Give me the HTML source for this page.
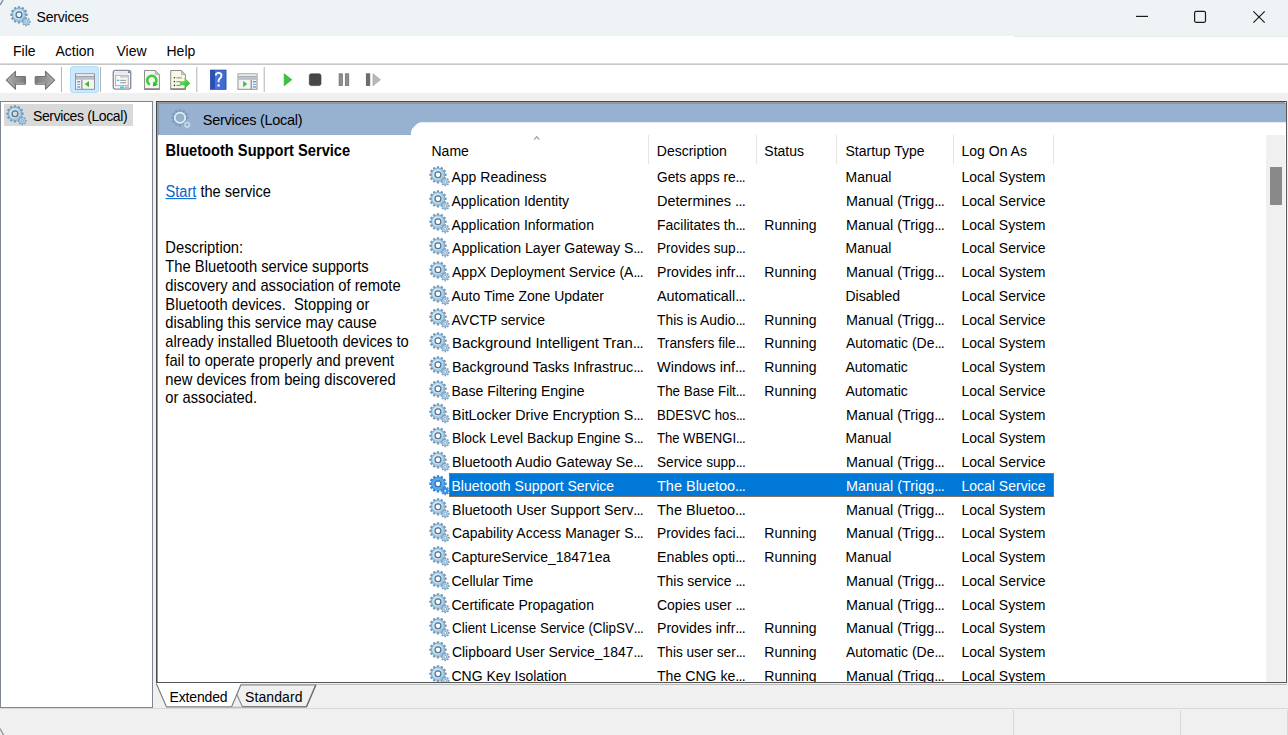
<!DOCTYPE html>
<html><head><meta charset="utf-8">
<style>
*{margin:0;padding:0;box-sizing:border-box}
html,body{width:1288px;height:735px;overflow:hidden;background:#f0f0f0;font-family:"Liberation Sans",sans-serif;font-size:14px;color:#000}
.a{position:absolute}
.t{position:absolute;white-space:nowrap}
</style></head><body>
<svg width="0" height="0" style="position:absolute">
<defs>
<radialGradient id="gr" cx="0.45" cy="0.45" r="0.6">
<stop offset="0.3" stop-color="#eaf8fd"/><stop offset="0.75" stop-color="#c2e4f4"/><stop offset="1" stop-color="#9cc6e4"/>
</radialGradient>
<g id="gear">
<path fill="#7799b8" fill-rule="evenodd" d="M7.21 2.14 L7.78 2.01 L7.82 0.18 L10.18 0.18 L10.22 2.01 L10.79 2.14 L11.34 2.31 L12.29 0.74 L14.33 1.93 L13.45 3.53 L13.88 3.92 L14.27 4.35 L15.87 3.47 L17.06 5.51 L15.49 6.46 L15.66 7.01 L15.79 7.58 L17.62 7.62 L17.62 9.98 L15.79 10.02 L15.66 10.59 L15.49 11.14 L17.06 12.09 L15.87 14.13 L14.27 13.25 L13.88 13.68 L13.45 14.07 L14.33 15.67 L12.29 16.86 L11.34 15.29 L10.79 15.46 L10.22 15.59 L10.18 17.42 L7.82 17.42 L7.78 15.59 L7.21 15.46 L6.66 15.29 L5.71 16.86 L3.67 15.67 L4.55 14.07 L4.12 13.68 L3.73 13.25 L2.13 14.13 L0.94 12.09 L2.51 11.14 L2.34 10.59 L2.21 10.02 L0.38 9.98 L0.38 7.62 L2.21 7.58 L2.34 7.01 L2.51 6.46 L0.94 5.51 L2.13 3.47 L3.73 4.35 L4.12 3.92 L4.55 3.53 L3.67 1.93 L5.71 0.74 L6.66 2.31Z M11.40 8.80 A2.4 2.4 0 1 0 6.60 8.80 A2.4 2.4 0 1 0 11.40 8.80Z"/>
<circle cx="9.0" cy="8.8" r="4.9" fill="none" stroke="url(#gr)" stroke-width="3.2"/>
<circle cx="9.0" cy="8.8" r="3.0" fill="none" stroke="#58728d" stroke-width="1.1"/>
<path fill="#7fa3c3" fill-rule="evenodd" d="M14.90 12.66 L15.34 12.51 L15.32 11.28 L17.08 11.28 L17.06 12.51 L17.50 12.66 L17.92 12.87 L18.77 11.99 L20.01 13.23 L19.13 14.08 L19.34 14.50 L19.49 14.94 L20.72 14.92 L20.72 16.68 L19.49 16.66 L19.34 17.10 L19.13 17.52 L20.01 18.37 L18.77 19.61 L17.92 18.73 L17.50 18.94 L17.06 19.09 L17.08 20.32 L15.32 20.32 L15.34 19.09 L14.90 18.94 L14.48 18.73 L13.63 19.61 L12.39 18.37 L13.27 17.52 L13.06 17.10 L12.91 16.66 L11.68 16.68 L11.68 14.92 L12.91 14.94 L13.06 14.50 L13.27 14.08 L12.39 13.23 L13.63 11.99 L14.48 12.87Z M17.10 15.80 A0.9 0.9 0 1 0 15.30 15.80 A0.9 0.9 0 1 0 17.10 15.80Z"/>
<circle cx="16.2" cy="15.8" r="2.2" fill="none" stroke="#b6d4ea" stroke-width="1.1"/>
</g>
<g id="gearsel">
<path fill="#2f84d6" fill-rule="evenodd" d="M7.21 2.14 L7.78 2.01 L7.82 0.18 L10.18 0.18 L10.22 2.01 L10.79 2.14 L11.34 2.31 L12.29 0.74 L14.33 1.93 L13.45 3.53 L13.88 3.92 L14.27 4.35 L15.87 3.47 L17.06 5.51 L15.49 6.46 L15.66 7.01 L15.79 7.58 L17.62 7.62 L17.62 9.98 L15.79 10.02 L15.66 10.59 L15.49 11.14 L17.06 12.09 L15.87 14.13 L14.27 13.25 L13.88 13.68 L13.45 14.07 L14.33 15.67 L12.29 16.86 L11.34 15.29 L10.79 15.46 L10.22 15.59 L10.18 17.42 L7.82 17.42 L7.78 15.59 L7.21 15.46 L6.66 15.29 L5.71 16.86 L3.67 15.67 L4.55 14.07 L4.12 13.68 L3.73 13.25 L2.13 14.13 L0.94 12.09 L2.51 11.14 L2.34 10.59 L2.21 10.02 L0.38 9.98 L0.38 7.62 L2.21 7.58 L2.34 7.01 L2.51 6.46 L0.94 5.51 L2.13 3.47 L3.73 4.35 L4.12 3.92 L4.55 3.53 L3.67 1.93 L5.71 0.74 L6.66 2.31Z M11.40 8.80 A2.4 2.4 0 1 0 6.60 8.80 A2.4 2.4 0 1 0 11.40 8.80Z"/>
<circle cx="9.0" cy="8.8" r="4.9" fill="none" stroke="#5aa8e8" stroke-width="3.0"/>
<circle cx="9.0" cy="8.8" r="3.0" fill="none" stroke="#2d78c4" stroke-width="1.1"/>
<path fill="#3d8edb" fill-rule="evenodd" d="M14.90 12.66 L15.34 12.51 L15.32 11.28 L17.08 11.28 L17.06 12.51 L17.50 12.66 L17.92 12.87 L18.77 11.99 L20.01 13.23 L19.13 14.08 L19.34 14.50 L19.49 14.94 L20.72 14.92 L20.72 16.68 L19.49 16.66 L19.34 17.10 L19.13 17.52 L20.01 18.37 L18.77 19.61 L17.92 18.73 L17.50 18.94 L17.06 19.09 L17.08 20.32 L15.32 20.32 L15.34 19.09 L14.90 18.94 L14.48 18.73 L13.63 19.61 L12.39 18.37 L13.27 17.52 L13.06 17.10 L12.91 16.66 L11.68 16.68 L11.68 14.92 L12.91 14.94 L13.06 14.50 L13.27 14.08 L12.39 13.23 L13.63 11.99 L14.48 12.87Z M17.10 15.80 A0.9 0.9 0 1 0 15.30 15.80 A0.9 0.9 0 1 0 17.10 15.80Z"/>
</g>
<g id="gearhdr">
<path fill="#7890ac" fill-rule="evenodd" opacity="0.75" d="M7.21 2.14 L7.78 2.01 L7.82 0.18 L10.18 0.18 L10.22 2.01 L10.79 2.14 L11.34 2.31 L12.29 0.74 L14.33 1.93 L13.45 3.53 L13.88 3.92 L14.27 4.35 L15.87 3.47 L17.06 5.51 L15.49 6.46 L15.66 7.01 L15.79 7.58 L17.62 7.62 L17.62 9.98 L15.79 10.02 L15.66 10.59 L15.49 11.14 L17.06 12.09 L15.87 14.13 L14.27 13.25 L13.88 13.68 L13.45 14.07 L14.33 15.67 L12.29 16.86 L11.34 15.29 L10.79 15.46 L10.22 15.59 L10.18 17.42 L7.82 17.42 L7.78 15.59 L7.21 15.46 L6.66 15.29 L5.71 16.86 L3.67 15.67 L4.55 14.07 L4.12 13.68 L3.73 13.25 L2.13 14.13 L0.94 12.09 L2.51 11.14 L2.34 10.59 L2.21 10.02 L0.38 9.98 L0.38 7.62 L2.21 7.58 L2.34 7.01 L2.51 6.46 L0.94 5.51 L2.13 3.47 L3.73 4.35 L4.12 3.92 L4.55 3.53 L3.67 1.93 L5.71 0.74 L6.66 2.31Z M11.40 8.80 A2.4 2.4 0 1 0 6.60 8.80 A2.4 2.4 0 1 0 11.40 8.80Z"/>
<circle cx="9.0" cy="8.8" r="6.2" fill="#97b1d1"/>
<circle cx="9.0" cy="8.8" r="5.0" fill="none" stroke="#d6f0fa" stroke-width="2.0"/>
<circle cx="9.0" cy="8.8" r="3.9" fill="none" stroke="#9c9a9e" stroke-width="0.6" opacity="0.7"/>
<path fill="#9fb6cf" fill-rule="evenodd" d="M14.90 12.66 L15.34 12.51 L15.32 11.28 L17.08 11.28 L17.06 12.51 L17.50 12.66 L17.92 12.87 L18.77 11.99 L20.01 13.23 L19.13 14.08 L19.34 14.50 L19.49 14.94 L20.72 14.92 L20.72 16.68 L19.49 16.66 L19.34 17.10 L19.13 17.52 L20.01 18.37 L18.77 19.61 L17.92 18.73 L17.50 18.94 L17.06 19.09 L17.08 20.32 L15.32 20.32 L15.34 19.09 L14.90 18.94 L14.48 18.73 L13.63 19.61 L12.39 18.37 L13.27 17.52 L13.06 17.10 L12.91 16.66 L11.68 16.68 L11.68 14.92 L12.91 14.94 L13.06 14.50 L13.27 14.08 L12.39 13.23 L13.63 11.99 L14.48 12.87Z M17.10 15.80 A0.9 0.9 0 1 0 15.30 15.80 A0.9 0.9 0 1 0 17.10 15.80Z"/>
<circle cx="16.2" cy="15.8" r="2.3" fill="none" stroke="#cfe3f0" stroke-width="1.1"/>
</g>
</defs>
</svg>

<div class="a" style="left:0;top:0;width:1288px;height:36px;background:#eef3f5"></div>
<svg class="a" style="left:9.5px;top:6px" width="22" height="22"><use href="#gear"/></svg>
<svg class="a" style="left:0;top:0" width="6" height="8"><path d="M3 0 L0 5" stroke="#8a94a8" stroke-width="1.5"/></svg>
<div class="t" style="left:36.50px;top:7.85px;font-size:14px;line-height:18px;letter-spacing:-0.2px;transform:scale(1.0000,1.0700);transform-origin:0 13.85px;">Services</div>
<svg class="a" style="left:1120px;top:0" width="168" height="36"><line x1="16" y1="16.4" x2="28" y2="16.4" stroke="#1a1a1a" stroke-width="1.2"/><rect x="74.6" y="11.4" width="10.9" height="10.9" rx="1.5" fill="none" stroke="#1a1a1a" stroke-width="1.2"/><path d="M133.4 11.3 L144.7 22.6 M144.7 11.3 L133.4 22.6" stroke="#1a1a1a" stroke-width="1.2"/></svg>
<div class="a" style="left:0;top:36px;width:1288px;height:27px;background:#fff"></div>
<div class="a" style="left:1014px;top:36px;width:274px;height:1px;background:#e9eaea"></div>
<div class="t" style="left:13.00px;top:41.75px;font-size:14px;line-height:18px;transform:scale(1.0000,1.0700);transform-origin:0 13.85px;">File</div>
<div class="t" style="left:55.50px;top:41.75px;font-size:14px;line-height:18px;transform:scale(1.0000,1.0700);transform-origin:0 13.85px;">Action</div>
<div class="t" style="left:116.50px;top:41.75px;font-size:14px;line-height:18px;transform:scale(1.0000,1.0700);transform-origin:0 13.85px;">View</div>
<div class="t" style="left:166.50px;top:41.75px;font-size:14px;line-height:18px;transform:scale(1.0000,1.0700);transform-origin:0 13.85px;">Help</div>
<div class="a" style="left:0;top:63px;width:1288px;height:1px;background:#dadada"></div>
<div class="a" style="left:0;top:64px;width:1288px;height:1px;background:#c6c6c6"></div>
<div class="a" style="left:0;top:65px;width:1288px;height:28px;background:#fff"></div>
<div class="a" style="left:0;top:93px;width:1288px;height:8px;background:#f0f0f0"></div>
<svg class="a" style="left:0;top:0" width="400" height="100">
<defs>
<linearGradient id="arw" x1="0" y1="0" x2="1" y2="0"><stop offset="0" stop-color="#a8a8a8"/><stop offset="0.6" stop-color="#909090"/><stop offset="1" stop-color="#7a7a7a"/></linearGradient><linearGradient id="arw2" x1="1" y1="0" x2="0" y2="0"><stop offset="0" stop-color="#a8a8a8"/><stop offset="0.6" stop-color="#909090"/><stop offset="1" stop-color="#7a7a7a"/></linearGradient>
<linearGradient id="grn" x1="0" y1="0" x2="1" y2="1"><stop offset="0" stop-color="#7ee07a"/><stop offset="1" stop-color="#1fb51f"/></linearGradient>
<linearGradient id="hlp" x1="0" y1="0" x2="1" y2="0"><stop offset="0" stop-color="#2b4fb8"/><stop offset="0.3" stop-color="#2b4fb8"/><stop offset="0.31" stop-color="#4a77d8"/><stop offset="1" stop-color="#3d66cc"/></linearGradient>
</defs>
<!-- back / forward -->
<path d="M6.3 80.2 L15.5 71.4 L15.5 76.5 L24.6 76.5 Q25.5 76.5 25.5 77.4 L25.5 83.3 Q25.5 84.3 24.6 84.3 L15.5 84.3 L15.5 89.2 Z" fill="url(#arw)" stroke="#737373" stroke-width="1.1" stroke-linejoin="round"/><path d="M8.2 80.2 L14.5 74.2 M14.5 86.2 L8.2 80.2 M16.2 83.3 L24.5 83.3" fill="none" stroke="#c4c4c4" stroke-width="0.7" opacity="0.8"/>
<path d="M54.7 80.2 L45.5 71.4 L45.5 76.5 L36.1 76.5 Q35.2 76.5 35.2 77.4 L35.2 83.3 Q35.2 84.3 36.1 84.3 L45.5 84.3 L45.5 89.2 Z" fill="url(#arw2)" stroke="#737373" stroke-width="1.1" stroke-linejoin="round"/><path d="M52.8 80.2 L46.5 74.2 M46.5 86.2 L52.8 80.2 M44.8 83.3 L36.5 83.3" fill="none" stroke="#c4c4c4" stroke-width="0.7" opacity="0.8"/>
<rect x="61" y="67" width="1" height="25" fill="#b4b4b4"/>
<!-- highlighted button -->
<rect x="70.5" y="66.5" width="28" height="26" rx="2.5" fill="#cce8fc" stroke="#b4dcfb" stroke-width="1"/>
<rect x="75.5" y="73.8" width="19" height="15.5" fill="#f4f4f4" stroke="#8c939c" stroke-width="1"/>
<rect x="76" y="74.3" width="18" height="2" fill="#e8eaee"/>
<rect x="76" y="76.3" width="18" height="0.8" fill="#7b8594"/>
<rect x="76" y="77.1" width="18" height="2.6" fill="#b9bec6"/>
<rect x="81.2" y="79.7" width="1.3" height="9.5" fill="#8c939c"/>
<rect x="77.2" y="81.2" width="3" height="1.1" fill="#3f7fd0"/>
<rect x="77.2" y="83.8" width="3" height="1.1" fill="#7fa6d8"/>
<rect x="77.2" y="86.4" width="3" height="1.1" fill="#3f7fd0"/>
<path d="M84.8 84 L89 80.9 L89 87.2 Z" fill="#41b83c"/>
<rect x="100" y="67" width="1" height="25" fill="#b4b4b4"/>
<!-- properties -->
<rect x="113.3" y="70.4" width="17.4" height="18.7" rx="2" fill="#f7f7f7" stroke="#8a9099" stroke-width="1.4"/>
<rect x="114.3" y="71.4" width="15.4" height="2" fill="#e5e8ec"/>
<rect x="128" y="71.2" width="2" height="1.8" fill="#6f86a6"/>
<rect x="115.6" y="75.3" width="12.6" height="10.3" fill="#fafafa" stroke="#a3a8b8" stroke-width="0.9"/>
<rect x="120" y="75.5" width="8" height="2.2" fill="#c9ccd8"/>
<rect x="117" y="79.7" width="2.2" height="1.3" fill="#35b8f0"/>
<rect x="120.2" y="79.8" width="6" height="1.1" fill="#9a9a9a"/>
<rect x="120.2" y="82.2" width="6" height="1.1" fill="#9a9a9a"/>
<rect x="120" y="86.5" width="4.2" height="2" fill="#37c6f4"/>
<rect x="125" y="86.5" width="4" height="2" fill="#b8b8b8"/>
<!-- refresh -->
<path d="M144.5 70.5 L155.3 70.5 L159.4 74.6 L159.4 89.2 L144.5 89.2 Z" fill="#f6f6f6" stroke="#8f8f8f" stroke-width="1"/>
<path d="M155.3 70.5 L155.3 74.6 L159.4 74.6 Z" fill="#c8c8c8" stroke="#9a9a9a" stroke-width="0.6"/>
<rect x="144.3" y="88.4" width="15.3" height="1.4" fill="#7a7a7a"/>
<path d="M149.86 84.57 A4.6 4.6 0 1 1 155.57 83.04" fill="none" stroke="#3ccc36" stroke-width="2.6"/>
<path d="M153.5 81.6 L158 84.8 L152.8 86.4 Z" fill="#1dbb1a"/>
<!-- export list -->
<path d="M170.7 70.5 L181.5 70.5 L185.5 74.6 L185.5 89.2 L170.7 89.2 Z" fill="#fcf7e2" stroke="#8f8f8f" stroke-width="1"/>
<path d="M181.5 70.5 L181.5 74.6 L185.5 74.6 Z" fill="#c8c8c8" stroke="#9a9a9a" stroke-width="0.6"/>
<rect x="170.5" y="88.4" width="15.2" height="1.4" fill="#7a7a7a"/>
<circle cx="174.4" cy="77.8" r="0.8" fill="#333"/>
<circle cx="174.4" cy="81.6" r="0.8" fill="#333"/>
<circle cx="174.4" cy="85.4" r="0.8" fill="#333"/>
<rect x="176.4" y="77.3" width="5.4" height="1.1" fill="#8a8ab8"/>
<rect x="176.4" y="81.1" width="4" height="1.1" fill="#8a8ab8"/>
<rect x="176.4" y="84.9" width="4" height="1.1" fill="#8a8ab8"/>
<path d="M179.8 81.2 L184.5 81.2 L184.5 77.6 L190.2 83.2 L184.5 88.8 L184.5 85.2 L179.8 85.2 Z" fill="url(#grn)"/>
<rect x="196.3" y="67" width="1" height="25" fill="#b4b4b4"/>
<!-- help -->
<rect x="210.3" y="70" width="15.8" height="19.5" fill="url(#hlp)" stroke="#1f3f9f" stroke-width="0.6"/>
<path d="M215.8 75.5 Q215.8 72.8 218.6 72.8 Q221.5 72.8 221.5 75.6 Q221.5 77.3 219.8 78.4 Q218.6 79.2 218.6 81 L218.6 82.3" fill="none" stroke="#fff" stroke-width="1.8"/>
<circle cx="218.6" cy="85.4" r="1.2" fill="#fff"/>
<!-- action pane -->
<rect x="238" y="73.9" width="19" height="15.4" fill="#f4f4f4" stroke="#8c939c" stroke-width="1"/>
<rect x="238.5" y="74.4" width="18" height="2" fill="#e8eaee"/>
<rect x="238.5" y="76.4" width="18" height="0.8" fill="#7b8594"/>
<rect x="238.5" y="77.2" width="18" height="2.6" fill="#b9bec6"/>
<rect x="250.6" y="79.8" width="1.3" height="9.5" fill="#8c939c"/>
<rect x="252.9" y="81.2" width="3" height="1.1" fill="#3f7fd0"/>
<rect x="252.9" y="83.8" width="3" height="1.1" fill="#7fa6d8"/>
<rect x="252.9" y="86.4" width="3" height="1.1" fill="#3f7fd0"/>
<path d="M243.2 81 L247.2 84 L243.2 87.2 Z" fill="#41b83c"/>
<rect x="263.7" y="67" width="1" height="25" fill="#b4b4b4"/>
<!-- play / stop / pause / restart -->
<path d="M284.2 73.8 L291.8 79.7 L284.2 85.8 Z" fill="#3cc43a" stroke="#22a820" stroke-width="0.6" stroke-linejoin="round"/>
<rect x="309.3" y="73.8" width="11.7" height="11.8" rx="2" fill="#474747" stroke="#3a3a3a" stroke-width="0.6"/>
<rect x="339.1" y="73.8" width="3.3" height="11.8" fill="#8e8e8e" stroke="#6a6a6a" stroke-width="0.7"/>
<rect x="345.3" y="73.8" width="3.5" height="11.8" fill="#8e8e8e" stroke="#6a6a6a" stroke-width="0.7"/>
<rect x="366.3" y="73.8" width="3.5" height="11.8" fill="#6e6e6e" stroke="#555" stroke-width="0.7"/>
<path d="M373 73.8 L380.4 79.7 L373 85.8 Z" fill="#b9b9b9" stroke="#999" stroke-width="0.6" stroke-linejoin="round"/>
</svg>

<div class="a" style="left:0;top:101px;width:153px;height:607px;background:#fff;border:1px solid #7e8694"></div>
<div class="a" style="left:4px;top:104px;width:128.5px;height:21.5px;background:#d9d9d9"></div>
<svg class="a" style="left:6px;top:105px" width="22" height="22"><use href="#gear"/></svg>
<div class="t" style="left:33.00px;top:106.75px;font-size:14px;line-height:18px;letter-spacing:-0.38px;transform:scale(1.0000,1.0700);transform-origin:0 13.85px;">Services (Local)</div>
<div class="a" style="left:156px;top:101px;width:1131px;height:582px;background:#fff;border:1px solid #4a4a4a;border-right-color:#5a5a5a;border-bottom-color:#555"></div>
<div class="a" style="left:157px;top:102px;width:1px;height:580px;background:#9a9a9a"></div>
<div class="a" style="left:157px;top:102px;width:1128px;height:1px;background:#9a9a9a"></div>
<div class="a" style="left:1285px;top:134px;width:1px;height:548px;background:#fafafa"></div>
<div class="a" style="left:158px;top:684px;width:1129px;height:1px;background:#bdbdbd"></div>
<div class="a" style="left:158px;top:103px;width:1128px;height:31.5px;background:#97b1d1;border-top:1px solid #8497b0;border-left:1px solid #8497b0"></div>
<div class="a" style="left:411px;top:122.2px;width:875px;height:20px;background:#fff;clip-path:polygon(0 100%,0 9.5px,1.3px 6.5px,3.5px 4px,6.5px 1.3px,9.5px 0,100% 0,100% 100%)"></div>
<svg class="a" style="left:171px;top:109.3px" width="22" height="22"><use href="#gearhdr"/></svg>
<div class="t" style="left:202.80px;top:110.58px;font-size:14.5px;line-height:18px;letter-spacing:-0.28px;transform:scale(1.0000,1.0700);transform-origin:0 14.02px;">Services (Local)</div>
<div class="t" style="left:165.50px;top:141.82px;font-size:14.65px;line-height:18px;font-weight:bold;transform:scale(1.0000,1.0700);transform-origin:0 14.08px;">Bluetooth Support Service</div>
<div class="t" style="left:165.50px;top:182.84px;font-size:14.6px;line-height:18px;transform:scale(1.0000,1.0700);transform-origin:0 14.06px;"><span style="color:#0066cc;text-decoration:underline">Start</span> the service</div>
<div class="t" style="left:165.30px;top:239.49px;font-size:14.75px;line-height:18px;transform:scale(1.0000,1.0700);transform-origin:0 14.11px;">Description:</div>
<div class="t" style="left:165.30px;top:258.24px;font-size:14.75px;line-height:18px;transform:scale(1.0000,1.0700);transform-origin:0 14.11px;">The Bluetooth service supports</div>
<div class="t" style="left:165.30px;top:276.99px;font-size:14.75px;line-height:18px;transform:scale(1.0000,1.0700);transform-origin:0 14.11px;">discovery and association of remote</div>
<div class="t" style="left:165.30px;top:295.74px;font-size:14.75px;line-height:18px;transform:scale(1.0000,1.0700);transform-origin:0 14.11px;">Bluetooth devices.&nbsp; Stopping or</div>
<div class="t" style="left:165.30px;top:314.49px;font-size:14.75px;line-height:18px;transform:scale(1.0000,1.0700);transform-origin:0 14.11px;">disabling this service may cause</div>
<div class="t" style="left:165.30px;top:333.24px;font-size:14.75px;line-height:18px;transform:scale(1.0000,1.0700);transform-origin:0 14.11px;">already installed Bluetooth devices to</div>
<div class="t" style="left:165.30px;top:351.99px;font-size:14.75px;line-height:18px;transform:scale(1.0000,1.0700);transform-origin:0 14.11px;">fail to operate properly and prevent</div>
<div class="t" style="left:165.30px;top:370.74px;font-size:14.75px;line-height:18px;transform:scale(1.0000,1.0700);transform-origin:0 14.11px;">new devices from being discovered</div>
<div class="t" style="left:165.30px;top:389.49px;font-size:14.75px;line-height:18px;transform:scale(1.0000,1.0700);transform-origin:0 14.11px;">or associated.</div>
<div class="t" style="left:431.50px;top:142.15px;font-size:14px;line-height:18px;transform:scale(1.0000,1.0700);transform-origin:0 13.85px;">Name</div>
<div class="t" style="left:656.80px;top:142.15px;font-size:14px;line-height:18px;transform:scale(1.0000,1.0700);transform-origin:0 13.85px;">Description</div>
<div class="t" style="left:764.30px;top:142.15px;font-size:14px;line-height:18px;transform:scale(1.0000,1.0700);transform-origin:0 13.85px;">Status</div>
<div class="t" style="left:845.50px;top:142.15px;font-size:14px;line-height:18px;transform:scale(1.0000,1.0700);transform-origin:0 13.85px;">Startup Type</div>
<div class="t" style="left:961.50px;top:142.15px;font-size:14px;line-height:18px;transform:scale(1.0000,1.0700);transform-origin:0 13.85px;">Log On As</div>
<svg class="a" style="left:530px;top:133px" width="12" height="8"><path d="M4.2 6.6 L6.7 3.6 L9.4 6.6" fill="none" stroke="#9a9a9a" stroke-width="1.1"/></svg>
<div class="a" style="left:648.0px;top:135px;width:1px;height:29px;background:#e5e5e5"></div>
<div class="a" style="left:755.5px;top:135px;width:1px;height:29px;background:#e5e5e5"></div>
<div class="a" style="left:836.0px;top:135px;width:1px;height:29px;background:#e5e5e5"></div>
<div class="a" style="left:953.0px;top:135px;width:1px;height:29px;background:#e5e5e5"></div>
<div class="a" style="left:1053.0px;top:135px;width:1px;height:29px;background:#e5e5e5"></div>
<div class="a" style="left:449px;top:473.30px;width:605px;height:23.4px;background:#0078d7;border:1px solid #857565"></div>
<div class="a" style="left:0;top:0;width:1266px;height:682px;overflow:hidden">
<svg class="a" style="left:428.5px;top:165.80px" width="22" height="22"><use href="#gear"/></svg>
<div class="t" style="left:451.50px;top:168.15px;font-size:14px;line-height:18px;transform:scale(1.0000,1.0700);transform-origin:0 13.85px;">App Readiness</div>
<div class="t" style="left:656.80px;top:168.15px;font-size:14px;line-height:18px;transform:scale(0.9807,1.0700);transform-origin:0 13.85px;">Gets apps re<span style="letter-spacing:-0.7px">...</span></div>
<div class="t" style="left:845.50px;top:168.15px;font-size:14px;line-height:18px;transform:scale(1.0000,1.0700);transform-origin:0 13.85px;">Manual</div>
<div class="t" style="left:961.50px;top:168.15px;font-size:14px;line-height:18px;transform:scale(1.0000,1.0700);transform-origin:0 13.85px;">Local System</div>
<svg class="a" style="left:428.5px;top:189.55px" width="22" height="22"><use href="#gear"/></svg>
<div class="t" style="left:451.50px;top:191.90px;font-size:14px;line-height:18px;transform:scale(1.0000,1.0700);transform-origin:0 13.85px;">Application Identity</div>
<div class="t" style="left:656.80px;top:191.90px;font-size:14px;line-height:18px;transform:scale(1.0347,1.0700);transform-origin:0 13.85px;">Determines <span style="letter-spacing:-0.7px">...</span></div>
<div class="t" style="left:845.50px;top:191.90px;font-size:14px;line-height:18px;transform:scale(1.0269,1.0700);transform-origin:0 13.85px;">Manual (Trigg<span style="letter-spacing:-0.7px">...</span></div>
<div class="t" style="left:961.50px;top:191.90px;font-size:14px;line-height:18px;transform:scale(1.0000,1.0700);transform-origin:0 13.85px;">Local Service</div>
<svg class="a" style="left:428.5px;top:213.30px" width="22" height="22"><use href="#gear"/></svg>
<div class="t" style="left:451.50px;top:215.65px;font-size:14px;line-height:18px;transform:scale(1.0000,1.0700);transform-origin:0 13.85px;">Application Information</div>
<div class="t" style="left:656.80px;top:215.65px;font-size:14px;line-height:18px;transform:scale(0.9981,1.0700);transform-origin:0 13.85px;">Facilitates th<span style="letter-spacing:-0.7px">...</span></div>
<div class="t" style="left:764.30px;top:215.65px;font-size:14px;line-height:18px;transform:scale(1.0000,1.0700);transform-origin:0 13.85px;">Running</div>
<div class="t" style="left:845.50px;top:215.65px;font-size:14px;line-height:18px;transform:scale(1.0269,1.0700);transform-origin:0 13.85px;">Manual (Trigg<span style="letter-spacing:-0.7px">...</span></div>
<div class="t" style="left:961.50px;top:215.65px;font-size:14px;line-height:18px;transform:scale(1.0000,1.0700);transform-origin:0 13.85px;">Local System</div>
<svg class="a" style="left:428.5px;top:237.05px" width="22" height="22"><use href="#gear"/></svg>
<div class="t" style="left:451.50px;top:239.40px;font-size:14px;line-height:18px;transform:scale(1.0087,1.0700);transform-origin:0 13.85px;">Application Layer Gateway S<span style="letter-spacing:-0.7px">...</span></div>
<div class="t" style="left:656.80px;top:239.40px;font-size:14px;line-height:18px;transform:scale(0.9722,1.0700);transform-origin:0 13.85px;">Provides sup<span style="letter-spacing:-0.7px">...</span></div>
<div class="t" style="left:845.50px;top:239.40px;font-size:14px;line-height:18px;transform:scale(1.0000,1.0700);transform-origin:0 13.85px;">Manual</div>
<div class="t" style="left:961.50px;top:239.40px;font-size:14px;line-height:18px;transform:scale(1.0000,1.0700);transform-origin:0 13.85px;">Local Service</div>
<svg class="a" style="left:428.5px;top:260.80px" width="22" height="22"><use href="#gear"/></svg>
<div class="t" style="left:451.50px;top:263.15px;font-size:14px;line-height:18px;transform:scale(1.0006,1.0700);transform-origin:0 13.85px;">AppX Deployment Service (A<span style="letter-spacing:-0.7px">...</span></div>
<div class="t" style="left:656.80px;top:263.15px;font-size:14px;line-height:18px;transform:scale(1.0070,1.0700);transform-origin:0 13.85px;">Provides infr<span style="letter-spacing:-0.7px">...</span></div>
<div class="t" style="left:764.30px;top:263.15px;font-size:14px;line-height:18px;transform:scale(1.0000,1.0700);transform-origin:0 13.85px;">Running</div>
<div class="t" style="left:845.50px;top:263.15px;font-size:14px;line-height:18px;transform:scale(1.0269,1.0700);transform-origin:0 13.85px;">Manual (Trigg<span style="letter-spacing:-0.7px">...</span></div>
<div class="t" style="left:961.50px;top:263.15px;font-size:14px;line-height:18px;transform:scale(1.0000,1.0700);transform-origin:0 13.85px;">Local System</div>
<svg class="a" style="left:428.5px;top:284.55px" width="22" height="22"><use href="#gear"/></svg>
<div class="t" style="left:451.50px;top:286.90px;font-size:14px;line-height:18px;transform:scale(1.0000,1.0700);transform-origin:0 13.85px;">Auto Time Zone Updater</div>
<div class="t" style="left:656.80px;top:286.90px;font-size:14px;line-height:18px;transform:scale(1.0251,1.0700);transform-origin:0 13.85px;">Automaticall<span style="letter-spacing:-0.7px">...</span></div>
<div class="t" style="left:845.50px;top:286.90px;font-size:14px;line-height:18px;transform:scale(1.0000,1.0700);transform-origin:0 13.85px;">Disabled</div>
<div class="t" style="left:961.50px;top:286.90px;font-size:14px;line-height:18px;transform:scale(1.0000,1.0700);transform-origin:0 13.85px;">Local Service</div>
<svg class="a" style="left:428.5px;top:308.30px" width="22" height="22"><use href="#gear"/></svg>
<div class="t" style="left:451.50px;top:310.65px;font-size:14px;line-height:18px;transform:scale(1.0000,1.0700);transform-origin:0 13.85px;">AVCTP service</div>
<div class="t" style="left:656.80px;top:310.65px;font-size:14px;line-height:18px;transform:scale(0.9893,1.0700);transform-origin:0 13.85px;">This is Audio<span style="letter-spacing:-0.7px">...</span></div>
<div class="t" style="left:764.30px;top:310.65px;font-size:14px;line-height:18px;transform:scale(1.0000,1.0700);transform-origin:0 13.85px;">Running</div>
<div class="t" style="left:845.50px;top:310.65px;font-size:14px;line-height:18px;transform:scale(1.0269,1.0700);transform-origin:0 13.85px;">Manual (Trigg<span style="letter-spacing:-0.7px">...</span></div>
<div class="t" style="left:961.50px;top:310.65px;font-size:14px;line-height:18px;transform:scale(1.0000,1.0700);transform-origin:0 13.85px;">Local Service</div>
<svg class="a" style="left:428.5px;top:332.05px" width="22" height="22"><use href="#gear"/></svg>
<div class="t" style="left:451.50px;top:334.40px;font-size:14px;line-height:18px;transform:scale(1.0609,1.0700);transform-origin:0 13.85px;">Background Intelligent Tran<span style="letter-spacing:-0.7px">...</span></div>
<div class="t" style="left:656.80px;top:334.40px;font-size:14px;line-height:18px;transform:scale(0.9781,1.0700);transform-origin:0 13.85px;">Transfers file<span style="letter-spacing:-0.7px">...</span></div>
<div class="t" style="left:764.30px;top:334.40px;font-size:14px;line-height:18px;transform:scale(1.0000,1.0700);transform-origin:0 13.85px;">Running</div>
<div class="t" style="left:845.50px;top:334.40px;font-size:14px;line-height:18px;transform:scale(0.9971,1.0700);transform-origin:0 13.85px;">Automatic (De<span style="letter-spacing:-0.7px">...</span></div>
<div class="t" style="left:961.50px;top:334.40px;font-size:14px;line-height:18px;transform:scale(1.0000,1.0700);transform-origin:0 13.85px;">Local System</div>
<svg class="a" style="left:428.5px;top:355.80px" width="22" height="22"><use href="#gear"/></svg>
<div class="t" style="left:451.50px;top:358.15px;font-size:14px;line-height:18px;transform:scale(1.0271,1.0700);transform-origin:0 13.85px;">Background Tasks Infrastruc<span style="letter-spacing:-0.7px">...</span></div>
<div class="t" style="left:656.80px;top:358.15px;font-size:14px;line-height:18px;transform:scale(1.0347,1.0700);transform-origin:0 13.85px;">Windows inf<span style="letter-spacing:-0.7px">...</span></div>
<div class="t" style="left:764.30px;top:358.15px;font-size:14px;line-height:18px;transform:scale(1.0000,1.0700);transform-origin:0 13.85px;">Running</div>
<div class="t" style="left:845.50px;top:358.15px;font-size:14px;line-height:18px;transform:scale(1.0000,1.0700);transform-origin:0 13.85px;">Automatic</div>
<div class="t" style="left:961.50px;top:358.15px;font-size:14px;line-height:18px;transform:scale(1.0000,1.0700);transform-origin:0 13.85px;">Local System</div>
<svg class="a" style="left:428.5px;top:379.55px" width="22" height="22"><use href="#gear"/></svg>
<div class="t" style="left:451.50px;top:381.90px;font-size:14px;line-height:18px;transform:scale(1.0000,1.0700);transform-origin:0 13.85px;">Base Filtering Engine</div>
<div class="t" style="left:656.80px;top:381.90px;font-size:14px;line-height:18px;transform:scale(0.9559,1.0700);transform-origin:0 13.85px;">The Base Filt<span style="letter-spacing:-0.7px">...</span></div>
<div class="t" style="left:764.30px;top:381.90px;font-size:14px;line-height:18px;transform:scale(1.0000,1.0700);transform-origin:0 13.85px;">Running</div>
<div class="t" style="left:845.50px;top:381.90px;font-size:14px;line-height:18px;transform:scale(1.0000,1.0700);transform-origin:0 13.85px;">Automatic</div>
<div class="t" style="left:961.50px;top:381.90px;font-size:14px;line-height:18px;transform:scale(1.0000,1.0700);transform-origin:0 13.85px;">Local Service</div>
<svg class="a" style="left:428.5px;top:403.30px" width="22" height="22"><use href="#gear"/></svg>
<div class="t" style="left:451.50px;top:405.65px;font-size:14px;line-height:18px;transform:scale(1.0172,1.0700);transform-origin:0 13.85px;">BitLocker Drive Encryption S<span style="letter-spacing:-0.7px">...</span></div>
<div class="t" style="left:656.80px;top:405.65px;font-size:14px;line-height:18px;transform:scale(0.9399,1.0700);transform-origin:0 13.85px;">BDESVC hos<span style="letter-spacing:-0.7px">...</span></div>
<div class="t" style="left:845.50px;top:405.65px;font-size:14px;line-height:18px;transform:scale(1.0269,1.0700);transform-origin:0 13.85px;">Manual (Trigg<span style="letter-spacing:-0.7px">...</span></div>
<div class="t" style="left:961.50px;top:405.65px;font-size:14px;line-height:18px;transform:scale(1.0000,1.0700);transform-origin:0 13.85px;">Local System</div>
<svg class="a" style="left:428.5px;top:427.05px" width="22" height="22"><use href="#gear"/></svg>
<div class="t" style="left:451.50px;top:429.40px;font-size:14px;line-height:18px;transform:scale(0.9924,1.0700);transform-origin:0 13.85px;">Block Level Backup Engine S<span style="letter-spacing:-0.7px">...</span></div>
<div class="t" style="left:656.80px;top:429.40px;font-size:14px;line-height:18px;transform:scale(0.9325,1.0700);transform-origin:0 13.85px;">The WBENGI<span style="letter-spacing:-0.7px">...</span></div>
<div class="t" style="left:845.50px;top:429.40px;font-size:14px;line-height:18px;transform:scale(1.0000,1.0700);transform-origin:0 13.85px;">Manual</div>
<div class="t" style="left:961.50px;top:429.40px;font-size:14px;line-height:18px;transform:scale(1.0000,1.0700);transform-origin:0 13.85px;">Local System</div>
<svg class="a" style="left:428.5px;top:450.80px" width="22" height="22"><use href="#gear"/></svg>
<div class="t" style="left:451.50px;top:453.15px;font-size:14px;line-height:18px;transform:scale(1.0170,1.0700);transform-origin:0 13.85px;">Bluetooth Audio Gateway Se<span style="letter-spacing:-0.7px">...</span></div>
<div class="t" style="left:656.80px;top:453.15px;font-size:14px;line-height:18px;transform:scale(0.9722,1.0700);transform-origin:0 13.85px;">Service supp<span style="letter-spacing:-0.7px">...</span></div>
<div class="t" style="left:845.50px;top:453.15px;font-size:14px;line-height:18px;transform:scale(1.0269,1.0700);transform-origin:0 13.85px;">Manual (Trigg<span style="letter-spacing:-0.7px">...</span></div>
<div class="t" style="left:961.50px;top:453.15px;font-size:14px;line-height:18px;transform:scale(1.0000,1.0700);transform-origin:0 13.85px;">Local Service</div>
<svg class="a" style="left:428.5px;top:474.55px" width="22" height="22"><use href="#gearsel"/></svg>
<div class="t" style="left:451.50px;top:476.90px;font-size:14px;line-height:18px;color:#fff;transform:scale(1.0000,1.0700);transform-origin:0 13.85px;">Bluetooth Support Service</div>
<div class="t" style="left:656.80px;top:476.90px;font-size:14px;line-height:18px;color:#fff;transform:scale(1.0343,1.0700);transform-origin:0 13.85px;">The Bluetoo<span style="letter-spacing:-0.7px">...</span></div>
<div class="t" style="left:845.50px;top:476.90px;font-size:14px;line-height:18px;color:#fff;transform:scale(1.0269,1.0700);transform-origin:0 13.85px;">Manual (Trigg<span style="letter-spacing:-0.7px">...</span></div>
<div class="t" style="left:961.50px;top:476.90px;font-size:14px;line-height:18px;color:#fff;transform:scale(1.0000,1.0700);transform-origin:0 13.85px;">Local Service</div>
<svg class="a" style="left:428.5px;top:498.30px" width="22" height="22"><use href="#gear"/></svg>
<div class="t" style="left:451.50px;top:500.65px;font-size:14px;line-height:18px;transform:scale(1.0171,1.0700);transform-origin:0 13.85px;">Bluetooth User Support Serv<span style="letter-spacing:-0.7px">...</span></div>
<div class="t" style="left:656.80px;top:500.65px;font-size:14px;line-height:18px;transform:scale(1.0343,1.0700);transform-origin:0 13.85px;">The Bluetoo<span style="letter-spacing:-0.7px">...</span></div>
<div class="t" style="left:845.50px;top:500.65px;font-size:14px;line-height:18px;transform:scale(1.0269,1.0700);transform-origin:0 13.85px;">Manual (Trigg<span style="letter-spacing:-0.7px">...</span></div>
<div class="t" style="left:961.50px;top:500.65px;font-size:14px;line-height:18px;transform:scale(1.0000,1.0700);transform-origin:0 13.85px;">Local System</div>
<svg class="a" style="left:428.5px;top:522.05px" width="22" height="22"><use href="#gear"/></svg>
<div class="t" style="left:451.50px;top:524.40px;font-size:14px;line-height:18px;transform:scale(0.9965,1.0700);transform-origin:0 13.85px;">Capability Access Manager S<span style="letter-spacing:-0.7px">...</span></div>
<div class="t" style="left:656.80px;top:524.40px;font-size:14px;line-height:18px;transform:scale(0.9807,1.0700);transform-origin:0 13.85px;">Provides faci<span style="letter-spacing:-0.7px">...</span></div>
<div class="t" style="left:764.30px;top:524.40px;font-size:14px;line-height:18px;transform:scale(1.0000,1.0700);transform-origin:0 13.85px;">Running</div>
<div class="t" style="left:845.50px;top:524.40px;font-size:14px;line-height:18px;transform:scale(1.0269,1.0700);transform-origin:0 13.85px;">Manual (Trigg<span style="letter-spacing:-0.7px">...</span></div>
<div class="t" style="left:961.50px;top:524.40px;font-size:14px;line-height:18px;transform:scale(1.0000,1.0700);transform-origin:0 13.85px;">Local System</div>
<svg class="a" style="left:428.5px;top:545.80px" width="22" height="22"><use href="#gear"/></svg>
<div class="t" style="left:451.50px;top:548.15px;font-size:14px;line-height:18px;transform:scale(1.0000,1.0700);transform-origin:0 13.85px;">CaptureService_18471ea</div>
<div class="t" style="left:656.80px;top:548.15px;font-size:14px;line-height:18px;transform:scale(1.0157,1.0700);transform-origin:0 13.85px;">Enables opti<span style="letter-spacing:-0.7px">...</span></div>
<div class="t" style="left:764.30px;top:548.15px;font-size:14px;line-height:18px;transform:scale(1.0000,1.0700);transform-origin:0 13.85px;">Running</div>
<div class="t" style="left:845.50px;top:548.15px;font-size:14px;line-height:18px;transform:scale(1.0000,1.0700);transform-origin:0 13.85px;">Manual</div>
<div class="t" style="left:961.50px;top:548.15px;font-size:14px;line-height:18px;transform:scale(1.0000,1.0700);transform-origin:0 13.85px;">Local System</div>
<svg class="a" style="left:428.5px;top:569.55px" width="22" height="22"><use href="#gear"/></svg>
<div class="t" style="left:451.50px;top:571.90px;font-size:14px;line-height:18px;transform:scale(1.0000,1.0700);transform-origin:0 13.85px;">Cellular Time</div>
<div class="t" style="left:656.80px;top:571.90px;font-size:14px;line-height:18px;transform:scale(0.9982,1.0700);transform-origin:0 13.85px;">This service <span style="letter-spacing:-0.7px">...</span></div>
<div class="t" style="left:845.50px;top:571.90px;font-size:14px;line-height:18px;transform:scale(1.0269,1.0700);transform-origin:0 13.85px;">Manual (Trigg<span style="letter-spacing:-0.7px">...</span></div>
<div class="t" style="left:961.50px;top:571.90px;font-size:14px;line-height:18px;transform:scale(1.0000,1.0700);transform-origin:0 13.85px;">Local Service</div>
<svg class="a" style="left:428.5px;top:593.30px" width="22" height="22"><use href="#gear"/></svg>
<div class="t" style="left:451.50px;top:595.65px;font-size:14px;line-height:18px;transform:scale(1.0000,1.0700);transform-origin:0 13.85px;">Certificate Propagation</div>
<div class="t" style="left:656.80px;top:595.65px;font-size:14px;line-height:18px;transform:scale(0.9981,1.0700);transform-origin:0 13.85px;">Copies user <span style="letter-spacing:-0.7px">...</span></div>
<div class="t" style="left:845.50px;top:595.65px;font-size:14px;line-height:18px;transform:scale(1.0269,1.0700);transform-origin:0 13.85px;">Manual (Trigg<span style="letter-spacing:-0.7px">...</span></div>
<div class="t" style="left:961.50px;top:595.65px;font-size:14px;line-height:18px;transform:scale(1.0000,1.0700);transform-origin:0 13.85px;">Local System</div>
<svg class="a" style="left:428.5px;top:617.05px" width="22" height="22"><use href="#gear"/></svg>
<div class="t" style="left:451.50px;top:619.40px;font-size:14px;line-height:18px;transform:scale(0.9577,1.0700);transform-origin:0 13.85px;">Client License Service (ClipSV<span style="letter-spacing:-0.7px">...</span></div>
<div class="t" style="left:656.80px;top:619.40px;font-size:14px;line-height:18px;transform:scale(1.0070,1.0700);transform-origin:0 13.85px;">Provides infr<span style="letter-spacing:-0.7px">...</span></div>
<div class="t" style="left:764.30px;top:619.40px;font-size:14px;line-height:18px;transform:scale(1.0000,1.0700);transform-origin:0 13.85px;">Running</div>
<div class="t" style="left:845.50px;top:619.40px;font-size:14px;line-height:18px;transform:scale(1.0269,1.0700);transform-origin:0 13.85px;">Manual (Trigg<span style="letter-spacing:-0.7px">...</span></div>
<div class="t" style="left:961.50px;top:619.40px;font-size:14px;line-height:18px;transform:scale(1.0000,1.0700);transform-origin:0 13.85px;">Local System</div>
<svg class="a" style="left:428.5px;top:640.80px" width="22" height="22"><use href="#gear"/></svg>
<div class="t" style="left:451.50px;top:643.15px;font-size:14px;line-height:18px;transform:scale(0.9924,1.0700);transform-origin:0 13.85px;">Clipboard User Service_1847<span style="letter-spacing:-0.7px">...</span></div>
<div class="t" style="left:656.80px;top:643.15px;font-size:14px;line-height:18px;transform:scale(0.9724,1.0700);transform-origin:0 13.85px;">This user ser<span style="letter-spacing:-0.7px">...</span></div>
<div class="t" style="left:764.30px;top:643.15px;font-size:14px;line-height:18px;transform:scale(1.0000,1.0700);transform-origin:0 13.85px;">Running</div>
<div class="t" style="left:845.50px;top:643.15px;font-size:14px;line-height:18px;transform:scale(0.9971,1.0700);transform-origin:0 13.85px;">Automatic (De<span style="letter-spacing:-0.7px">...</span></div>
<div class="t" style="left:961.50px;top:643.15px;font-size:14px;line-height:18px;transform:scale(1.0000,1.0700);transform-origin:0 13.85px;">Local System</div>
<svg class="a" style="left:428.5px;top:664.55px" width="22" height="22"><use href="#gear"/></svg>
<div class="t" style="left:451.50px;top:666.90px;font-size:14px;line-height:18px;transform:scale(1.0000,1.0700);transform-origin:0 13.85px;">CNG Key Isolation</div>
<div class="t" style="left:656.80px;top:666.90px;font-size:14px;line-height:18px;transform:scale(1.0070,1.0700);transform-origin:0 13.85px;">The CNG ke<span style="letter-spacing:-0.7px">...</span></div>
<div class="t" style="left:764.30px;top:666.90px;font-size:14px;line-height:18px;transform:scale(1.0000,1.0700);transform-origin:0 13.85px;">Running</div>
<div class="t" style="left:845.50px;top:666.90px;font-size:14px;line-height:18px;transform:scale(1.0269,1.0700);transform-origin:0 13.85px;">Manual (Trigg<span style="letter-spacing:-0.7px">...</span></div>
<div class="t" style="left:961.50px;top:666.90px;font-size:14px;line-height:18px;transform:scale(1.0000,1.0700);transform-origin:0 13.85px;">Local System</div>
</div>
<div class="a" style="left:1266px;top:135px;width:19px;height:547px;background:#f0f0f0"></div>
<div class="a" style="left:1270px;top:167px;width:12px;height:37.5px;background:#898989"></div>
<svg class="a" style="left:0;top:0" width="400" height="735">
<path d="M232.5 685 L315.8 685 L306.5 706.7 L242.4 706.7 Z" fill="#f0f0f0" stroke="#8c8c8c" stroke-width="1.1" stroke-linejoin="round"/><path d="M315.8 685 L306.5 706.7 L242.4 706.7" fill="none" stroke="#6e6e6e" stroke-width="1.3" stroke-linejoin="round"/>
<path d="M156.3 683 L241.5 683 L231.6 706.7 L166.4 706.7 Z" fill="#fff"/>
<path d="M156.3 683.5 L166.4 706.7 L231.6 706.7 L241 684.5" fill="none" stroke="#7a7a7a" stroke-width="1.1" stroke-linejoin="round"/>
<path d="M166 707.2 L306.5 707.2" stroke="#a8a8a8" stroke-width="1"/>
</svg>
<div class="t" style="left:169.50px;top:688.45px;font-size:14px;line-height:18px;letter-spacing:-0.15px;transform:scale(1.0000,1.0700);transform-origin:0 13.85px;">Extended</div>
<div class="t" style="left:245.00px;top:688.45px;font-size:14px;line-height:18px;letter-spacing:0.1px;transform:scale(1.0000,1.0700);transform-origin:0 13.85px;">Standard</div>
<div class="a" style="left:0;top:708px;width:1288px;height:1px;background:#d9d9d9"></div>
<div class="a" style="left:1013px;top:710px;width:1px;height:25px;background:#d9d9d9"></div>
<div class="a" style="left:1179.5px;top:710px;width:1px;height:25px;background:#d9d9d9"></div>
<div class="a" style="left:1287px;top:710px;width:1px;height:25px;background:#d9d9d9"></div>
<svg class="a" style="left:0;top:726px" width="6" height="9"><path d="M0 2.5 L3.5 9" stroke="#9a9a9a" stroke-width="1.5"/></svg>
</body></html>
